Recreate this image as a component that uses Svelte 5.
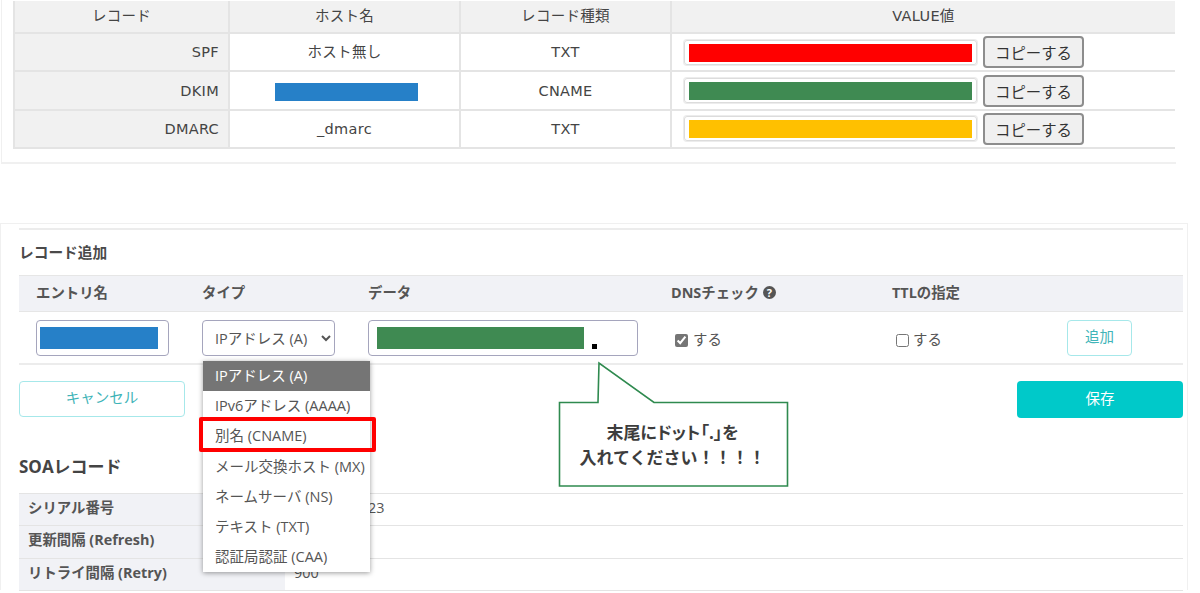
<script>
  const records = [
    { name: 'SPF', host: 'ホスト無し', type: 'TXT', color: '#ff0000' },
    { name: 'DKIM', host: '', type: 'CNAME', color: '#3f8a52' },
    { name: 'DMARC', host: '_dmarc', type: 'TXT', color: '#ffc000' }
  ];
  const options = [
    'IPアドレス (A)',
    'IPv6アドレス (AAAA)',
    '別名 (CNAME)',
    'メール交換ホスト (MX)',
    'ネームサーバ (NS)',
    'テキスト (TXT)',
    '認証局認証 (CAA)'
  ];
  const soa = [
    ['シリアル番号', '20230101123'],
    ['更新間隔 (Refresh)', ''],
    ['リトライ間隔 (Retry)', '900']
  ];
</script>

<div class="page">
  <section class="top">
    <table class="dns">
      <colgroup>
        <col style="width: 215px" />
        <col style="width: 231px" />
        <col style="width: 211px" />
        <col />
      </colgroup>
      <thead>
        <tr>
          <th>レコード</th>
          <th>ホスト名</th>
          <th>レコード種類</th>
          <th>VALUE値</th>
        </tr>
      </thead>
      <tbody>
        {#each records as r}
          <tr>
            <th class="name">{r.name}</th>
            <td>
              {#if r.host}{r.host}{:else}<span class="host-mask"></span>{/if}
            </td>
            <td>{r.type}</td>
            <td class="value">
              <span class="value-box"><span class="value-fill" style="background: {r.color}"></span></span><button class="copy">コピーする</button>
            </td>
          </tr>
        {/each}
      </tbody>
    </table>
  </section>

  <section class="panel">
    <div class="inner">
      <h3 class="add-title">レコード追加</h3>

      <div class="grid head">
        <div>エントリ名</div>
        <div>タイプ</div>
        <div>データ</div>
        <div class="dns-head">DNSチェック <span class="help">?</span></div>
        <div>TTLの指定</div>
        <div></div>
      </div>

      <div class="grid row">
        <div class="field entry"><span class="mask blue"></span></div>
        <div class="select-wrap">
          <select class="type-select">
            {#each options as o}<option>{o}</option>{/each}
          </select>
          <ul class="menu">
            {#each options as o, i}
              <li class:selected={i === 0} class:marked={i === 2}>{o}</li>
            {/each}
          </ul>
        </div>
        <div class="field data"><span class="mask green"></span><span class="dot"></span></div>
        <label class="check first"><input type="checkbox" checked />する</label>
        <label class="check second"><input type="checkbox" />する</label>
        <div><button class="add">追加</button></div>
      </div>

      <div class="actions">
        <button class="cancel">キャンセル</button>
        <button class="save">保存</button>
      </div>

      <h3 class="soa-title">SOAレコード</h3>
      <table class="soa">
        <tbody>
          {#each soa as s}
            <tr>
              <th>{s[0]}</th>
              <td>{s[1]}</td>
            </tr>
          {/each}
        </tbody>
      </table>
    </div>

    <div class="callout">
      <svg width="232" height="128" viewBox="0 0 232 128">
        <path d="M1.5 41.5H40L41 2L96 41.5H229.5V125H1.5Z" fill="#fff" stroke="#2f8a4f" stroke-width="1.6" />
      </svg>
      <p><span class="tight">末尾にドット「.」を</span><br />入れてください！！！！</p>
    </div>
  </section>
</div>

<style>
  :global(body) {
    background: #fff;
  }
  .page {
    width: 1200px;
    height: 593px;
    overflow: hidden;
    font-family: "Open Sans", "Noto Sans CJK JP", sans-serif;
    color: #444;
    box-sizing: border-box;
  }

  /* top screenshot */
  .top {
    box-sizing: border-box;
    width: 1175px;
    height: 164px;
    margin-left: 1px;
    padding: 1px 0 0 11px;
    border-left: 1px solid #f0f0f0;
    border-bottom: 2px solid #f0f0f0;
  }
  .dns {
    width: 1162px;
    table-layout: fixed;
    border-collapse: collapse;
    font-family: "DejaVu Sans", "Noto Sans CJK JP", sans-serif;
    font-size: 14.5px;
    letter-spacing: 0.3px;
    color: #444;
  }
  .dns th,
  .dns td {
    border: 2px solid #e4e4e4;
    font-weight: 400;
    text-align: center;
    padding: 0;
    line-height: 20px;
  }
  .dns tr:first-child > * {
    border-top: 0;
  }
  .dns thead th {
    height: 29px;
    padding-bottom: 2px;
    background: #f1f1f1;
  }
  .dns tbody tr {
    height: 38.4px;
  }
  .dns th:last-child,
  .dns td:last-child {
    border-right: 0;
  }
  .dns .name {
    background: #f1f1f1;
    text-align: right;
    padding-right: 9px;
  }
  .host-mask {
    display: inline-block;
    vertical-align: middle;
    width: 143px;
    height: 18px;
    margin-left: 3px;
    background: #2680c8;
  }
  .dns td.value {
    text-align: left;
    padding-left: 12px;
  }
  .value {
    white-space: nowrap;
  }
  .value-box {
    display: inline-block;
    vertical-align: middle;
    box-sizing: border-box;
    width: 293px;
    height: 25px;
    padding: 3px 4px;
    border: 1px solid #dcdcdc;
    border-radius: 3px;
    box-shadow: 0 0 0 1px #ececec;
  }
  .value-fill {
    display: block;
    height: 18px;
  }
  .copy {
    box-sizing: border-box;
    vertical-align: middle;
    width: 101px;
    height: 32px;
    margin-left: 6px;
    padding: 0;
    background: #f0f0f0;
    border: 2px solid #8d8d8d;
    border-radius: 4px;
    font: 400 15.4px/20px "Noto Sans CJK JP", sans-serif;
    color: #333;
  }

  /* bottom screenshot */
  .panel {
    position: relative;
    box-sizing: border-box;
    width: 1188px;
    height: 367px;
    margin: 59px 0 0 0;
    padding: 4px 0 0 18px;
    border-left: 1px solid #f0f0f0;
    border-top: 1px solid #f0f0f0;
    border-right: 1px solid #f0f0f0;
  }
  .inner {
    width: 1164px;
    border-top: 2px solid #ececec;
  }
  .add-title {
    margin: 0;
    padding-top: 12px;
    height: 33px;
    font-size: 14.7px;
    line-height: 20px;
    font-weight: 700;
    color: #4a4a4a;
    box-sizing: content-box;
  }
  .grid {
    display: grid;
    grid-template-columns: 166px 166px 303px 221px 175px 1fr;
    box-sizing: border-box;
    padding-left: 17px;
  }
  .head {
    height: 37px;
    padding-bottom: 2px;
    align-items: center;
    background: #f1f2f6;
    border-top: 1px solid #e6e6e6;
    border-bottom: 1px solid #e6e6e6;
    font-size: 14.4px;
    line-height: 20px;
    font-weight: 700;
    color: #555;
  }
  .dns-head {
    display: flex;
    align-items: center;
    gap: 4px;
  }
  .help {
    display: inline-flex;
    align-items: center;
    justify-content: center;
    width: 13px;
    height: 13px;
    border-radius: 50%;
    background: #555;
    color: #fff;
    font-size: 11px;
    line-height: 13px;
    font-weight: 700;
  }
  .row {
    height: 53px;
    padding-top: 8px;
    border-bottom: 2px solid #ececec;
    font-size: 14.4px;
    color: #555;
  }
  .field {
    position: relative;
    box-sizing: border-box;
    height: 36px;
    border: 1px solid #a5a5bd;
    border-radius: 4px;
    display: flex;
    align-items: center;
  }
  .entry {
    width: 133px;
    padding-left: 3px;
  }
  .data {
    width: 270px;
    padding-left: 8px;
  }
  .mask {
    display: block;
    height: 22px;
  }
  .blue {
    width: 118px;
    background: #2680c8;
  }
  .green {
    width: 207px;
    background: #3f8a52;
  }
  .dot {
    width: 5px;
    height: 5px;
    margin: 16px 0 0 8px;
    background: #000;
  }
  .select-wrap {
    position: relative;
  }
  .type-select {
    box-sizing: border-box;
    width: 133px;
    height: 36px;
    padding: 0 0 0 8px;
    background: #fff;
    border: 1px solid #a5a5bd;
    border-radius: 4px;
    font: 400 14.5px "Open Sans", "Noto Sans CJK JP", sans-serif;
    color: #555;
  }
  .menu {
    position: absolute;
    z-index: 2;
    top: 41px;
    left: 1px;
    width: 167px;
    margin: 0;
    padding: 0;
    list-style: none;
    background: #fff;
    box-shadow: 0 1px 5px rgba(0, 0, 0, 0.4);
  }
  .menu li {
    position: relative;
    height: 30.2px;
    padding-left: 12px;
    font-size: 14.5px;
    line-height: 29px;
    white-space: nowrap;
    color: #555;
  }
  .menu .selected {
    background: #757575;
    color: #fff;
  }
  .menu .marked::after {
    content: "";
    position: absolute;
    top: -4px;
    left: -4px;
    right: -6px;
    bottom: 0;
    border: 4px solid #ff0000;
    border-radius: 2px;
  }
  .check {
    display: flex;
    align-items: center;
    gap: 5px;
    height: 40px;
    font-size: 14.4px;
    line-height: 20px;
  }
  .check input {
    width: 13px;
    height: 13px;
    margin: 0;
    accent-color: #757575;
  }
  .first {
    padding-left: 4px;
  }
  .second {
    padding-left: 4px;
    gap: 4px;
  }
  .add {
    box-sizing: border-box;
    width: 65px;
    height: 36px;
    padding: 0 0 4px;
    background: #fff;
    border: 1px solid #a6e8ea;
    border-radius: 4px;
    font: 400 14.5px/20px "Noto Sans CJK JP", sans-serif;
    color: #3fb4b8;
  }
  .actions {
    display: flex;
    justify-content: space-between;
    align-items: flex-start;
    margin-top: 16px;
  }
  .cancel,
  .save {
    box-sizing: border-box;
    width: 166px;
    padding: 0 0 4px;
    border-radius: 4px;
    font: 400 14.5px/20px "Noto Sans CJK JP", sans-serif;
  }
  .cancel {
    height: 36px;
    background: #fff;
    border: 1px solid #a6e8ea;
    color: #3fb4b8;
  }
  .save {
    height: 37px;
    background: #00c9c9;
    border: 0;
    color: #fff;
  }
  .soa-title {
    margin: 38px 0 15px;
    font-size: 17px;
    line-height: 22px;
    font-weight: 700;
    color: #444;
  }
  .soa {
    width: 100%;
    border-collapse: collapse;
    font-size: 14.4px;
  }
  .soa th,
  .soa td {
    height: 28.3px;
    padding: 0 0 3px 9px;
    border-top: 1px solid #e4e4e4;
    border-bottom: 1px solid #e4e4e4;
    line-height: 20px;
    text-align: left;
    color: #555;
  }
  .soa th {
    width: 257px;
    background: #f1f2f6;
    font-weight: 700;
  }
  .callout {
    position: absolute;
    z-index: 1;
    left: 557px;
    top: 137px;
    width: 232px;
    height: 128px;
  }
  .callout svg {
    display: block;
  }
  .callout p {
    position: absolute;
    left: 0;
    right: 3px;
    top: 59px;
    margin: 0;
    text-align: center;
    font-size: 17px;
    line-height: 25px;
    font-weight: 700;
    color: #3d3d3d;
  }
  .tight {
    font-feature-settings: "palt";
  }
</style>
